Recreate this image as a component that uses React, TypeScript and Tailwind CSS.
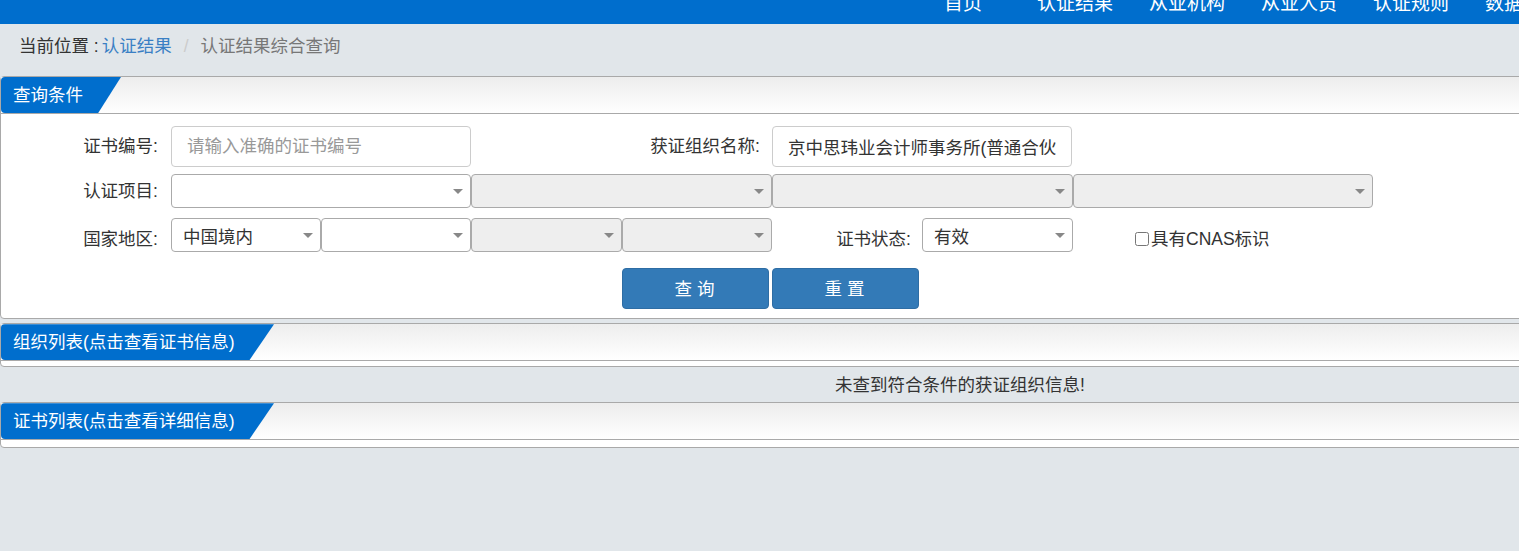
const navItems = ["首页", "认证结果", "从业机构", "从业人员", "认证规则", "数据统计"];

const Arrow = () => (
  <span className="border-x-[5px] border-t-[5px] border-x-transparent border-t-[#888] mr-[7px]" />
);

const Select = ({ w, value, disabled }: { w: string; value?: string; disabled?: boolean }) => (
  <div
    className={`${w} h-[34px] flex items-center rounded-[4px] border border-[#aaa] ${
      disabled ? "bg-[#eee]" : "bg-white"
    }`}
  >
    <span className="flex-1 pl-[11px] pt-[5px] text-[#333] leading-none">{value}</span>
    <Arrow />
  </div>
);

const PanelHead = ({ title, tab }: { title: string; tab: string }) => (
  <div className="h-[37px] border-b border-[#a9a9a9] bg-gradient-to-b from-[#ededed] to-white">
    <div className={`${tab} h-[36px] bg-[#006ecd] text-white flex items-center pl-[12px] rounded-tl-[4px] rounded-bl-[4px]`}>
      {title}
    </div>
  </div>
);

const App = () => {
  return (
    <div className="w-full min-h-[551px] overflow-hidden bg-[#e1e6ea] font-['Liberation_Sans','Noto_Sans_CJK_SC',sans-serif] text-[17.5px] text-[#333]">
      <div className="w-[1920px]">
        {/* top nav */}
        <div className="h-[24px] bg-[#006ecd] overflow-hidden flex pl-[907px]">
          {navItems.map((item) => (
            <div key={item} className="w-[112px] text-center text-white text-[19px] leading-[20px] -mt-[6px]">
              {item}
            </div>
          ))}
        </div>

        {/* breadcrumb */}
        <div className="h-[52px] pt-[10px] pl-[19px] leading-[24px]">
          <span className="text-[#333]">当前位置 :</span>
          <span className="text-[#3a7fc4] ml-[3px]">认证结果</span>
          <span className="text-[#ccc] px-[12px]">/</span>
          <span className="text-[#777]">认证结果综合查询</span>
        </div>

        {/* query panel */}
        <div className="border border-[#a9a9a9] rounded-[4px] bg-white">
          <PanelHead title="查询条件" tab="w-[120px] [clip-path:polygon(0_0,100%_0,81%_100%,0_100%)]" />
          <div className="pt-[12px] pb-[9px] flex flex-col">
            <div className="flex items-center h-[41px]">
              <div className="w-[157px] text-right">证书编号:</div>
              <input
                className="ml-[13px] w-[300px] h-[41px] rounded-[4px] border border-[#ccc] px-[15px] placeholder:text-[#999] outline-none"
                placeholder="请输入准确的证书编号"
              />
              <div className="w-[289px] text-right">获证组织名称:</div>
              <input
                className="ml-[12px] w-[300px] h-[41px] rounded-[4px] border border-[#ccc] px-[15px] text-[#333] outline-none"
                defaultValue="京中思玮业会计师事务所(普通合伙)"
                readOnly
              />
            </div>

            <div className="flex items-center mt-[7px]">
              <div className="w-[157px] text-right">认证项目:</div>
              <div className="ml-[13px] flex">
                <Select w="w-[300px]" />
                <Select w="w-[301px]" disabled />
                <Select w="w-[301px]" disabled />
                <Select w="w-[300px]" disabled />
              </div>
            </div>

            <div className="flex items-center mt-[10px]">
              <div className="w-[157px] text-right pt-[8px]">国家地区:</div>
              <div className="ml-[13px] flex">
                <Select w="w-[150px]" value="中国境内" />
                <Select w="w-[150px]" />
                <Select w="w-[151px]" disabled />
                <Select w="w-[150px]" disabled />
              </div>
              <div className="w-[139px] text-right pt-[8px]">证书状态:</div>
              <div className="ml-[11px]">
                <Select w="w-[151px]" value="有效" />
              </div>
              <label className="ml-[62px] flex items-center pt-[8px]">
                <input type="checkbox" className="w-[14px] h-[14px] m-0 mr-[2px]" />
                具有CNAS标识
              </label>
            </div>

            <div className="flex mt-[16px] pl-[621px] gap-[3px]">
              <button className="w-[147px] h-[41px] rounded-[4px] bg-[#337ab7] border border-[#2e6da4] text-white tracking-[5px] pl-[3px]">
                查询
              </button>
              <button className="w-[147px] h-[41px] rounded-[4px] bg-[#337ab7] border border-[#2e6da4] text-white tracking-[5px] pl-[3px]">
                重置
              </button>
            </div>
          </div>
        </div>

        {/* org list */}
        <div className="mt-[4px] border border-[#a9a9a9] rounded-[4px] bg-white">
          <PanelHead title="组织列表(点击查看证书信息)" tab="w-[273px] [clip-path:polygon(0_0,100%_0,91%_100%,0_100%)]" />
          <div className="h-[5px]" />
        </div>
        <div className="h-[35px] flex items-center justify-center">未查到符合条件的获证组织信息!</div>

        {/* cert list */}
        <div className="border border-[#a9a9a9] rounded-[4px] bg-white">
          <PanelHead title="证书列表(点击查看详细信息)" tab="w-[273px] [clip-path:polygon(0_0,100%_0,91%_100%,0_100%)]" />
          <div className="h-[7px]" />
        </div>
      </div>
    </div>
  );
};

export default App;
